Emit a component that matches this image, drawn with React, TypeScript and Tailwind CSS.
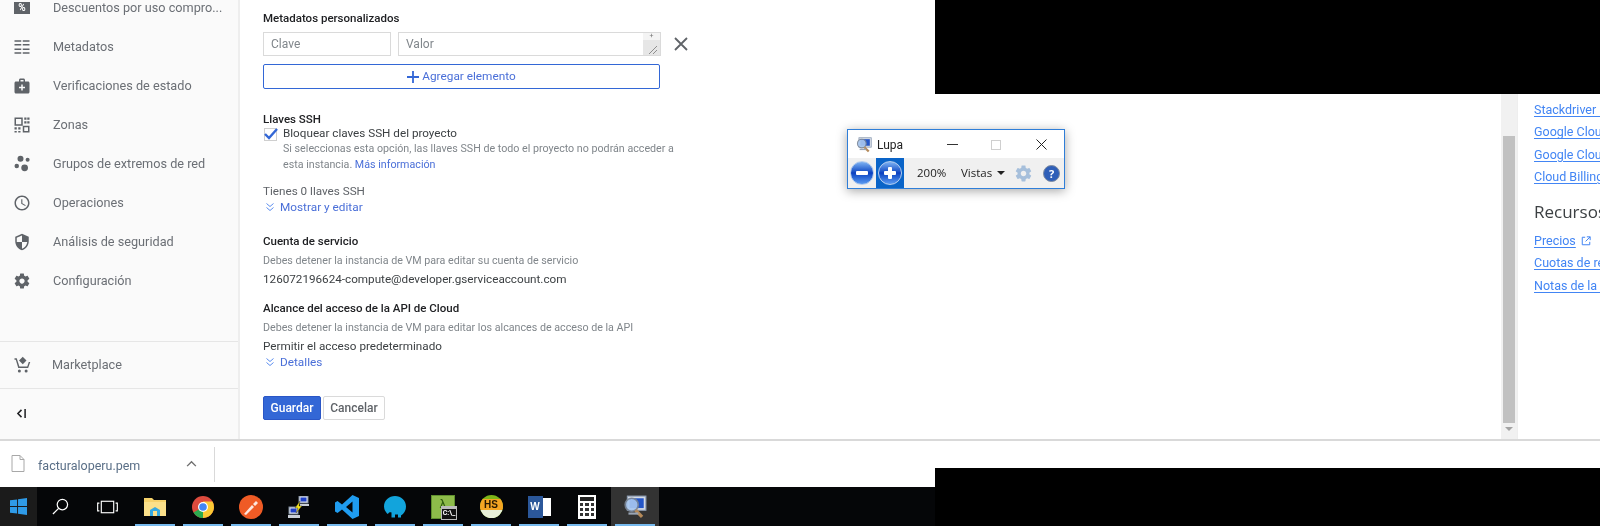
import React from "react";

const MI = ({ d }: { d: string }) => (
  <svg viewBox="0 0 24 24" className="w-[18px] h-[18px] fill-[#5f6368]"><path d={d} /></svg>
);

const paths = {
  bag: "M20 6h-4V4c0-1.1-.9-2-2-2h-4c-1.1 0-2 .9-2 2v2H4c-1.1 0-2 .9-2 2v12c0 1.1.9 2 2 2h16c1.1 0 2-.9 2-2V8c0-1.1-.9-2-2-2zM10 4h4v2h-4V4zm6 11h-3v3h-2v-3H8v-2h3v-3h2v3h3v2z",
  clock: "M11.99 2C6.47 2 2 6.48 2 12s4.47 10 9.99 10C17.52 22 22 17.52 22 12S17.52 2 11.99 2zM12 20c-4.42 0-8-3.58-8-8s3.58-8 8-8 8 3.58 8 8-3.58 8-8 8zm.5-13H11v6l5.25 3.15.75-1.23-4.5-2.67z",
  shield: "M12 1L3 5v6c0 5.55 3.84 10.74 9 12 5.16-1.26 9-6.45 9-12V5l-9-4zm0 10.99h7c-.53 4.12-3.28 7.79-7 8.94V12H5V6.3l7-3.11v8.8z",
  gear: "M19.43 12.98c.04-.32.07-.64.07-.98s-.03-.66-.07-.98l2.11-1.65c.19-.15.24-.42.12-.64l-2-3.46c-.12-.22-.39-.3-.61-.22l-2.49 1c-.52-.4-1.08-.73-1.69-.98l-.38-2.65C14.46 2.18 14.25 2 14 2h-4c-.25 0-.46.18-.49.42l-.38 2.65c-.61.25-1.17.59-1.69.98l-2.49-1c-.23-.09-.49 0-.61.22l-2 3.46c-.13.22-.07.49.12.64l2.11 1.65c-.04.32-.07.65-.07.98s.03.66.07.98l-2.11 1.65c-.19.15-.24.42-.12.64l2 3.46c.12.22.39.3.61.22l2.49-1c.52.4 1.08.73 1.69.98l.38 2.65c.03.24.24.42.49.42h4c.25 0 .46-.18.49-.42l.38-2.65c.61-.25 1.17-.59 1.69-.98l2.49 1c.23.09.49 0 .61-.22l2-3.46c.12-.22.07-.49-.12-.64l-2.11-1.65zM12 15.5c-1.93 0-3.5-1.57-3.5-3.5s1.57-3.5 3.5-3.5 3.5 1.57 3.5 3.5-1.57 3.5-3.5 3.5z",
  list: "M2 3h9v2H2zM13 3h9v2h-9zM2 8h9v2H2zM13 8h9v2h-9zM2 14h9v2H2zM13 14h9v2h-9zM2 19h9v2H2zM13 19h9v2h-9z",
  zones: "M2 2h11v11H2zm2 2v7h7V4zM13 13h9v9h-9zm2 2v5h5v-5zM15 2h3v3h-3zM19 2h3v3h-3zM15 7h3v3h-3zM19 7h3v3h-3zM2 15h3v3H2zM7 15h3v3H7zM2 20h3v2H2zM7 20h3v2H7z",
  dots: "M10 9a4 4 0 1 0 0-8 4 4 0 0 0 0 8zM19.500 9a2.700 2.700 0 1 0 0-5.400 2.700 2.700 0 0 0 0 5.400zM15.500 21.500a4.500 4.500 0 1 0 0-9 4.500 4.500 0 0 0 0 9zM5 17.500a3 3 0 1 0 0-6 3 3 0 0 0 0 6z",
  cart: "M13 1l5 5-5 5-5-5zM2 3h3l3.500 11H19l2-6h2l-2.800 8H7L3.700 5H2zM8.500 18a2 2 0 1 1 0 4 2 2 0 0 1 0-4zM17.500 18a2 2 0 1 1 0 4 2 2 0 0 1 0-4z",
};

const PercentIcon = () => (
  <div className="w-[16px] h-[12px] shrink-0 bg-[#5f6368] flex items-center justify-center text-white text-[10px] font-bold leading-none">%</div>
);

const items: [string, React.ReactNode][] = [
  ["Descuentos por uso compro...", <PercentIcon />],
  ["Metadatos", <MI d={paths.list} />],
  ["Verificaciones de estado", <MI d={paths.bag} />],
  ["Zonas", <MI d={paths.zones} />],
  ["Grupos de extremos de red", <MI d={paths.dots} />],
  ["Operaciones", <MI d={paths.clock} />],
  ["Análisis de seguridad", <MI d={paths.shield} />],
  ["Configuración", <MI d={paths.gear} />],
];

const Sidebar = () => (
  <div className="w-[240px] shrink-0 h-full bg-[#fafafa] border-r-2 border-[#eeeeee] flex flex-col">
    <div className="mt-[-12px] h-[353px] shrink-0">
      {items.map(([t, ic]) => (
        <div key={t} className="h-[39px] flex items-center pl-[13px] text-[12.7px] text-[#6b6f75]">
          <div className="w-[18px] flex justify-center">{ic}</div>
          <span className="ml-[22px] whitespace-nowrap">{t}</span>
        </div>
      ))}
    </div>
    <div className="h-[47px] border-t border-[#e6e6e6] flex items-center pl-[13px] text-[12.7px] text-[#6b6f75]">
      <MI d={paths.cart} />
      <span className="ml-[21px]">Marketplace</span>
    </div>
    <div className="h-[50px] border-t border-[#e6e6e6] flex items-center pl-[16px] text-[13px] font-bold text-[#202124]">
      <svg viewBox="0 0 12 10" className="w-[11px] h-[9px] fill-none stroke-[#202124] stroke-[1.7]"><path d="M6 1L2 5l4 4M10 0v10" /></svg>
    </div>
  </div>
);

const Heading = ({ children }: { children: React.ReactNode }) => (
  <div className="text-[11.5px] leading-[14px] font-medium text-[#202124]">{children}</div>
);

const Chev = () => (
  <svg viewBox="0 0 10 10" className="w-[10px] h-[10px] fill-none stroke-[#5b8def] stroke-[1]"><path d="M1.500 1.500L5 4.500l3.500-3M1.500 5.500L5 8.500l3.500-3" /></svg>
);

const More = ({ children }: { children: string }) => (
  <div className="flex items-center text-[11.8px] leading-[16px] text-[#4a6fd8]">
    <span className="ml-[2px] mr-[5px]"><Chev /></span>{children}
  </div>
);

const Main = () => (
  <div className="flex-1 h-full bg-white pl-[23px] pt-[11px] text-[#3c4043] overflow-hidden">
    <Heading>Metadatos personalizados</Heading>
    <div className="flex items-center mt-[7px]">
      <div className="w-[128px] h-[24px] border border-[#dadada] pl-[7px] text-[12px] leading-[22px] text-[#80868b]">Clave</div>
      <div className="relative ml-[7px] w-[263px] h-[24px] border border-[#dadada] pl-[7px] text-[12px] leading-[22px] text-[#80868b]">
        Valor
        <div className="absolute right-0 top-0 w-[17px] h-[22px] bg-[#e6e6e6] flex flex-col">
          <div className="h-[7px] bg-[#f4f4f4] text-[7px] leading-[7px] text-center text-[#777]">+</div>
          <svg viewBox="0 0 16 15" className="w-[16px] h-[15px] stroke-[#777] stroke-[0.8]"><path d="M6 14L14 6M10 14L14 10" /></svg>
        </div>
      </div>
      <svg viewBox="0 0 14 14" className="ml-[13px] w-[14px] h-[14px] stroke-[#5f6368] stroke-[1.8]"><path d="M1 1l12 12M13 1L1 13" /></svg>
    </div>
    <div className="mt-[8px] w-[397px] h-[25px] border border-[#3367d6] rounded-[2px] flex items-center justify-center text-[11.8px] text-[#4a6fd8]">
      <svg viewBox="0 0 12 12" className="w-[12px] h-[12px] stroke-[#3367d6] stroke-[1.8] mr-[3px]"><path d="M6 0v12M0 6h12" /></svg>
      Agregar elemento
    </div>
    <div className="mt-[23px]"><Heading>Llaves SSH</Heading></div>
    <div className="flex items-center h-[14px] mt-[1px] text-[11.7px] text-[#3c4043]">
      <div className="ml-[1px] w-[13px] h-[13px] border border-[#cfcfcf] flex items-center justify-center">
        <svg viewBox="0 0 14 12" className="w-[14px] h-[12px] shrink-0 fill-none stroke-[#3367d6] stroke-[2.4]"><path d="M1 6l4 4 8-9" /></svg>
      </div>
      <span className="ml-[6px]">Bloquear claves SSH del proyecto</span>
    </div>
    <div className="ml-[20px] w-[400px] text-[10.7px] leading-[15.500px] text-[#80868b]">
      Si seleccionas esta opción, las llaves SSH de todo el proyecto no podrán acceder a esta instancia. <span className="text-[#4a6fd8]">Más información</span>
    </div>
    <div className="mt-[12px] text-[11.7px] leading-[15px] text-[#5f6368]">Tienes 0 llaves SSH</div>
    <More>Mostrar y editar</More>
    <div className="mt-[19px]"><Heading>Cuenta de servicio</Heading></div>
    <div className="mt-[6px] text-[10.7px] leading-[14px] text-[#80868b]">Debes detener la instancia de VM para editar su cuenta de servicio</div>
    <div className="mt-[4px] text-[11.7px] leading-[15px] text-[#3c4043]">126072196624-compute@developer.gserviceaccount.com</div>
    <div className="mt-[14px]"><Heading>Alcance del acceso de la API de Cloud</Heading></div>
    <div className="mt-[6px] text-[10.7px] leading-[14px] text-[#80868b]">Debes detener la instancia de VM para editar los alcances de acceso de la API</div>
    <div className="mt-[3px] text-[11.7px] leading-[16px] text-[#3c4043]">Permitir el acceso predeterminado</div>
    <More>Detalles</More>
    <div className="mt-[26px] flex gap-[2px]">
      <div className="w-[58px] h-[24px] rounded-[2px] bg-[#3367d6] border border-[#2a56c6] text-white text-[12px] font-medium flex items-center justify-center">Guardar</div>
      <div className="w-[62px] h-[24px] rounded-[2px] border border-[#dadada] text-[#5f6368] text-[12px] font-medium flex items-center justify-center">Cancelar</div>
    </div>
  </div>
);

const Download = () => (
  <div className="h-[48px] shrink-0 bg-white border-t-2 border-[#d9d9d9] flex items-center">
    <svg viewBox="0 0 14 17" className="ml-[11px] w-[14px] h-[17px] mb-[2px] fill-none stroke-[#a8a8a8]"><path d="M1 .5h8l4 4v12H1zM9 .5v4h4" /></svg>
    <span className="ml-[13px] mt-[5px] w-[148px] text-[12.5px] text-[#5a6f87]">facturaloperu.pem</span>
    <svg viewBox="0 0 12 8" className="w-[11px] h-[7px] fill-none stroke-[#6e6e6e] stroke-[1.600] mb-[1px]"><path d="M1 7l5-5 5 5" /></svg>
    <div className="ml-[17px] w-px h-[35px] bg-[#d9d9d9]" />
  </div>
);

const Slot = ({ children, on = true, active = false }: { children: React.ReactNode; on?: boolean; active?: boolean }) => (
  <div className={`relative w-[48px] h-full flex items-center justify-center ${active ? "bg-[#333333]" : ""}`}>
    {children}
    {on && <div className="absolute bottom-0 left-[4px] right-[4px] h-[2px] bg-[#76b9ed]" />}
  </div>
);

const LupaIcon = ({ s = 22 }: { s?: number }) => (
  <svg viewBox="0 0 22 22" width={s} height={s}>
    <rect x="4" y="1" width="17" height="13" fill="#d5dbe5" stroke="#8b9bb0" />
    <rect x="6" y="3" width="13" height="9" fill="#2456c8" />
    <circle cx="8" cy="9" r="6" fill="#a9c8f0" stroke="#7b8798" strokeWidth="1.500" opacity="0.9" />
    <path d="M11.500 14l6 6" stroke="#b58a5a" strokeWidth="3" />
    <rect x="5" y="16" width="9" height="2" fill="#9aa5b5" />
  </svg>
);

const Taskbar = () => (
  <div className="h-[39px] shrink-0 bg-[#050608] flex items-stretch">
    <div className="w-[37px] bg-[#1b1b1b] flex items-center justify-center">
      <svg viewBox="0 0 18 18" className="w-[17px] h-[17px] fill-[#2f9be8]"><path d="M0 2.500l7.500-1v7H0zM8.500 1.300L18 0v8.500H8.500zM0 9.500h7.500v7l-7.500-1zM8.500 9.500H18V18l-9.500-1.300z" /></svg>
    </div>
    <div className="w-[46px] flex items-center justify-center">
      <svg viewBox="0 0 18 18" className="w-[17px] h-[17px] fill-none stroke-white stroke-[1.300]"><circle cx="11" cy="7" r="5.500" /><path d="M7 11l-6 6" /></svg>
    </div>
    <div className="w-[48px] flex items-center justify-center">
      <svg viewBox="0 0 22 14" className="w-[21px] h-[14px] fill-none stroke-white stroke-[1.200]"><rect x="4.500" y="1" width="13" height="12" /><path d="M2.500 3H.7v8h1.800M19.500 3h1.800v8h-1.800" /></svg>
    </div>
    <Slot>
      <svg viewBox="0 0 22 20" className="w-[22px] h-[20px]"><path d="M0 1h8l2 2h12v15H0z" fill="#f6d26b" /><rect x="0" y="5" width="22" height="14" fill="#fbe08a" /><path d="M6 19v-6l5-3 5 3v6z" fill="#36a9e1" /><rect x="9" y="14" width="4" height="5" fill="#fbe08a" /></svg>
    </Slot>
    <Slot>
      <svg viewBox="0 0 22 22" className="w-[22px] h-[22px]"><circle cx="11" cy="11" r="11" fill="#dd4b3e" /><path d="M11 11L1.500 16.500A11 11 0 0 0 11 22l5-8z" fill="#2da94f" /><path d="M11 22A11 11 0 0 0 20.500 5.500H11z" fill="#fcc934" /><circle cx="11" cy="11" r="5" fill="#fff" /><circle cx="11" cy="11" r="3.800" fill="#4285f4" /></svg>
    </Slot>
    <Slot>
      <svg viewBox="0 0 24 24" className="w-[24px] h-[24px]"><circle cx="12" cy="12" r="12" fill="#ef5b25" /><path d="M5 19l8-9 2 2-8 8zM14 9l3-3 2 2-3 3z" fill="#fff" opacity="0.85" /></svg>
    </Slot>
    <Slot>
      <svg viewBox="0 0 22 22" className="w-[22px] h-[22px]"><rect x="11" y="0" width="9" height="7" fill="#dfe5f0" stroke="#7c8799" /><rect x="12.500" y="1.500" width="6" height="4" fill="#1e3fc8" /><rect x="1" y="11" width="9" height="7" fill="#dfe5f0" stroke="#7c8799" /><rect x="2.500" y="12.500" width="6" height="4" fill="#1e3fc8" /><rect x="0" y="19" width="12" height="3" fill="#c9ced6" /><rect x="12" y="8" width="9" height="2" fill="#c9ced6" /><path d="M12 5L7 12h3l-2 5 6-7h-3z" fill="#f7e418" stroke="#222" strokeWidth="0.400" /></svg>
    </Slot>
    <Slot>
      <svg viewBox="0 0 24 24" className="w-[24px] h-[24px]"><path d="M17.500 0L24 3v18l-6.500 3L7 14.500l-4.500 3.500L0 16.500v-9L2.500 6 7 9.500zM17.500 6.500L11 12l6.500 5.500z" fill="#1f9cf0" /></svg>
    </Slot>
    <Slot>
      <svg viewBox="0 0 24 24" className="w-[24px] h-[24px]"><path d="M12 1c6 0 11 4.500 11 10.500 0 4-2 7-5 9v2h-3v-3h-3v3H8.500v-5C7 17 5.500 17.500 5 19l-1-.5C2 16 1 14 1 11.500 1 5.500 6 1 12 1z" fill="#12a4dc" /></svg>
    </Slot>
    <Slot>
      <div className="relative w-[24px] h-[24px] bg-[#8dbb4a] border border-[#5f8f2e] flex justify-center text-[#2f5c10] text-[13px] leading-[16px]">
        λ
        <div className="absolute -right-[3px] -bottom-[2px] w-[16px] h-[14px] bg-[#111] border border-[#bbb] border-t-[3px] text-white text-[7px] leading-[9px] text-center font-bold">C:\_</div>
      </div>
    </Slot>
    <Slot>
      <div className="w-[23px] h-[23px] rounded-full bg-[#7cb518] overflow-hidden flex flex-col">
        <div className="h-[11px] mt-[4px] bg-[#f5a623] text-[#2a1a00] text-[10px] leading-[11px] font-bold text-center font-['Liberation_Sans']">HS</div>
        <div className="flex-1 bg-[#e8efd8]" />
      </div>
    </Slot>
    <Slot>
      <div className="relative w-[23px] h-[22px]">
        <div className="absolute right-0 top-[2px] w-[16px] h-[18px] bg-white" />
        <div className="absolute left-0 top-0 w-[15px] h-[22px] bg-[#2b579a] text-white text-[10px] leading-[22px] font-bold text-center font-['Liberation_Sans']">W</div>
      </div>
    </Slot>
    <Slot>
      <div className="w-[18px] h-[24px] bg-white p-[2px] flex flex-col gap-[1px]">
        <div className="h-[4px] bg-[#222]" />
        <div className="grid grid-cols-3 gap-[2px] mt-[1px]">
          {Array.from({ length: 9 }).map((_, i) => <div key={i} className="h-[3px] bg-[#333]" />)}
        </div>
      </div>
    </Slot>
    <Slot active><LupaIcon s={24} /></Slot>
    <div className="flex-1" />
  </div>
);

const Lk = ({ children }: { children: React.ReactNode }) => (
  <div className="h-[22.3px] text-[12.5px] leading-[22px] text-[#4285f4] whitespace-nowrap">
    <span className="underline underline-offset-2">{children}</span>
  </div>
);

const Right = () => (
  <div className="w-[665px] shrink-0 h-full flex flex-col">
    <div className="h-[94px] bg-black shrink-0" />
    <div className="h-[374px] bg-white shrink-0 flex flex-col">
      <div className="h-[345px] flex border-b-2 border-[#d9d9d9] box-content">
        <div className="w-[566px] shrink-0" />
        <div className="w-[16px] shrink-0 bg-[#f1f1f1] flex flex-col items-center">
          <div className="h-[42px] shrink-0" />
          <div className="w-[12px] h-[287px] bg-[#c1c1c1] shrink-0" />
          <div className="mt-[4px] w-0 h-0 border-x-[4px] border-x-transparent border-t-[4px] border-t-[#a3a3a3]" />
        </div>
        <div className="flex-1 border-l border-[#eeeeee] overflow-hidden pl-[16px] pt-[5px]">
          <Lk>Stackdriver Monitoring</Lk>
          <Lk>Google Cloud Platform</Lk>
          <Lk>Google Cloud Status</Lk>
          <Lk>Cloud Billing</Lk>
          <div className="mt-[10px] mb-[4px] h-[28px] text-[17px] leading-[28px] text-[#3c4043] font-['Open_Sans']">Recursos</div>
          <div className="flex items-center">
            <Lk>Precios</Lk>
            <svg viewBox="0 0 12 12" className="ml-[5px] w-[10px] h-[10px] fill-none stroke-[#4285f4] stroke-[1.200]"><path d="M5 1.500H1.500v9h9V7M7 1h4v4M11 1L5.500 6.500" /></svg>
          </div>
          <Lk>Cuotas de recursos</Lk>
          <Lk>Notas de la versión</Lk>
        </div>
      </div>
      <div className="flex-1 bg-white" />
    </div>
    <div className="flex-1 bg-black" />
  </div>
);

const Circle = ({ minus, bg }: { minus?: boolean; bg?: boolean }) => (
  <div className={`w-[28px] h-[30px] shrink-0 flex items-center justify-center ${bg ? "bg-[#0a64c8]" : ""}`}>
    <div className="w-[24px] h-[24px] rounded-full bg-gradient-to-b from-[#7fb2f2] via-[#0a3fc0] to-[#5a9af2] border border-[#b4cdee] flex items-center justify-center">
      <div className="relative w-[12px] h-[12px] flex items-center justify-center">
        <div className="w-[12px] h-[4px] bg-white rounded-[1px]" />
        {!minus && <div className="absolute w-[4px] h-[12px] bg-white rounded-[1px]" />}
      </div>
    </div>
  </div>
);

const Lupa = () => (
  <div className="absolute left-[847px] top-[129px] w-[218px] h-[60px] bg-white border border-[#2f7ed8] shadow-[0_2px_10px_rgba(0,0,0,0.35)] flex flex-col font-['Roboto']">
    <div className="h-[29px] flex items-center text-[12px] text-[#222] pt-[1px]">
      <span className="ml-[8px]"><LupaIcon s={16} /></span>
      <span className="ml-[5px] w-[50px]">Lupa</span>
      <div className="ml-[20px] w-[11px] h-px bg-[#333]" />
      <div className="ml-[33px] w-[10px] h-[10px] border border-[#cfcfcf]" />
      <svg viewBox="0 0 11 11" className="ml-[35px] w-[11px] h-[11px] stroke-[#222]"><path d="M.5.500l10 10M10.500.500l-10 10" /></svg>
    </div>
    <div className="flex-1 bg-[#f0f0f0] flex items-center text-[12px] text-[#222] font-['Open_Sans']">
      <Circle minus />
      <Circle bg />
      <span className="ml-[13px] w-[44px] text-[11.5px]">200%</span>
      <span className="w-[36px] text-[11.5px]">Vistas</span>
      <div className="w-0 h-0 border-x-[4px] border-x-transparent border-t-[4px] border-t-[#222]" />
      <svg viewBox="0 0 24 24" className="ml-[9px] w-[19px] h-[19px] fill-[#a6bfdb]"><path d={paths.gear} /></svg>
      <div className="ml-[10px] w-[17px] h-[17px] rounded-full bg-[#2f5fb8] border border-[#7c8aa0] text-white text-[11px] leading-[15px] font-bold text-center">?</div>
    </div>
  </div>
);

export default function App() {
  return (
    <div className="relative w-[1600px] h-[526px] overflow-hidden bg-black flex font-['Roboto',sans-serif] blur-[0.3px]">
      <div className="w-[935px] shrink-0 h-full flex flex-col">
        <div className="h-[439px] shrink-0 flex overflow-hidden">
          <Sidebar />
          <Main />
        </div>
        <Download />
        <Taskbar />
      </div>
      <Right />
      <Lupa />
    </div>
  );
}
